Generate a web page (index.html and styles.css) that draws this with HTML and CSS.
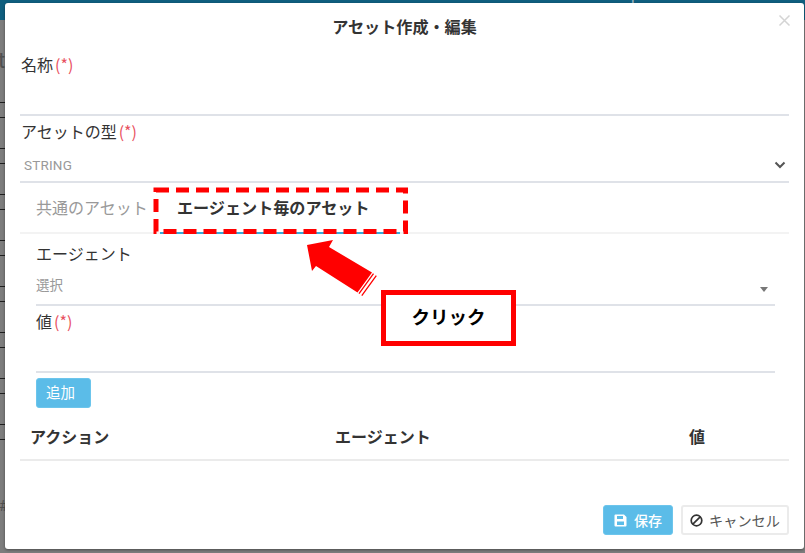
FILE: index.html
```html
<!DOCTYPE html>
<html lang="ja">
<head>
<meta charset="utf-8">
<title>アセット作成・編集</title>
<link rel="stylesheet" href="styles.css">
</head>
<body>
<div class="page-behind">
  <span class="behind-title">Robot platform labo</span>
  <span class="behind-t">t</span>
  <span class="behind-hash">#</span>
</div>
<main class="modal">
  <header class="modal-header">
    <h1 class="modal-title">アセット作成・編集</h1>
    <svg class="close" width="13" height="13" viewBox="0 0 13 13"><path d="M1.500 1.500l10 10M11.500 1.500l-10 10" stroke="#d4d4d4" stroke-width="1.500" fill="none"/></svg>
  </header>
  <section class="form">
    <label class="label">名称<span class="req">(*)</span></label>
    <div class="input name-input"></div>
    <label class="label">アセットの型<span class="req">(*)</span></label>
    <div class="select">
      <span class="select-value">STRING</span>
      <svg width="12" height="8" viewBox="0 0 12 8"><path d="M1.500 1.500L6 6l4.500-4.500" stroke="#555" stroke-width="2" fill="none"/></svg>
    </div>
    <nav class="tabs">
      <span class="tab">共通のアセット</span>
      <span class="tab tab-active">エージェント毎のアセット</span>
    </nav>
    <div class="agent-pane">
      <label class="label">エージェント</label>
      <div class="input agent-select">
        <span class="placeholder">選択</span>
        <span class="caret"></span>
      </div>
      <label class="label">値<span class="req">(*)</span></label>
      <div class="input value-input"></div>
      <button class="btn btn-primary add-btn">追加</button>
    </div>
    <div class="table-head">
      <span class="col col-action">アクション</span>
      <span class="col col-agent">エージェント</span>
      <span class="col">値</span>
    </div>
  </section>
  <footer class="modal-footer">
    <button class="btn btn-primary save-btn">
      <svg width="13" height="13" viewBox="0 0 13 13"><path fill-rule="evenodd" fill="#fff" d="M1.500 0.500h8.500l2.500 2.500v8.500a1 1 0 0 1-1 1h-10a1 1 0 0 1-1-1v-10a1 1 0 0 1 1-1zM3 2v3h6V2zM3 7.500V11h7V7.500z"/></svg>
      保存
    </button>
    <button class="btn btn-light">
      <svg width="13" height="13" viewBox="0 0 13 13"><circle cx="6.500" cy="6.500" r="5.300" stroke="#333" stroke-width="1.700" fill="none"/><path d="M2.800 10.200l7.400-7.400" stroke="#333" stroke-width="1.700"/></svg>
      キャンセル
    </button>
  </footer>
</main>
<svg class="annotation" width="805" height="553" viewBox="0 0 805 553">
  <rect x="156" y="190" width="249.500" height="41.500" fill="none" stroke="#f00" stroke-width="5" stroke-dasharray="13 7"/>
  <path fill="#f00" d="M307 245L333 240L329 247L372 272.500L357.500 292.500L316 266L312 271Z"/>
  <path d="M373.500 273.700L359 293.700M376.300 275.700L361.800 295.700" stroke="#f00" stroke-width="1.300" fill="none"/>
</svg>
<div class="callout">クリック</div>
</body>
</html>
```
FILE: styles.css
```css
* { box-sizing: border-box; }
html, body { margin: 0; height: 100%; }
body {
  width: 805px;
  height: 553px;
  overflow: hidden;
  position: relative;
  padding: 3px 1px 4px 5px;
  background:
    linear-gradient(#0f5f7f 0 20px, transparent 20px),
    linear-gradient(#7d7d7d 0 0) 0 0 / 100% 100%;
  font-family: "Noto Sans CJK JP", "Noto Sans", sans-serif;
  color: #333;
}
.page-behind {
  position: absolute;
  inset: 0;
  background: repeating-linear-gradient(
    to bottom,
    transparent 0 10px,
    #1e1e1e 10px 11px,
    transparent 11px 25px,
    #1e1e1e 25px 26px,
    transparent 26px 46px
  ) 0 92px / 5px 350px no-repeat;
}
.behind-title {
  position: absolute;
  left: 580px;
  top: -15px;
  font: 16px "Roboto", sans-serif;
  letter-spacing: .8px;
  color: #9fb4bf;
}
.behind-t { position: absolute; left: -2px; top: 48px; font: 22px "Roboto", sans-serif; color: #505050; }
.behind-hash { position: absolute; left: -1px; top: 498px; font: 14px "Roboto", sans-serif; color: #505050; }
.modal {
  position: relative;
  height: 546px;
  background: #fff;
  border-radius: 3px;
  box-shadow: 0 1px 3px rgba(0, 0, 0, .4);
  display: flex;
  flex-direction: column;
}
.modal-header {
  height: 44px;
  display: flex;
  align-items: center;
  justify-content: center;
  padding-top: 1px;
}
.modal-title { margin: 0; font-size: 16.100px; font-weight: 700; line-height: 24px; color: #333; }
.close { position: absolute; right: 13px; top: 11px; }
.form { padding: 5px 15px 0 15px; }
.label { display: block; height: 24px; padding-left: 1px; font-size: 16px; line-height: 24px; color: #333; }
.agent-pane .label { padding-left: 0; }
.req { color: #e8515f; margin-left: 2px; }
.input { border-bottom: 2px solid #dfe2e8; }
.name-input { height: 40px; margin-bottom: 3px; }
.select {
  height: 40px;
  border-bottom: 2px solid #dfe2e8;
  display: flex;
  align-items: center;
  justify-content: space-between;
  padding: 6px 3px 0 4px;
}
.select-value { font: 13.500px/16px "Roboto", sans-serif; color: #999; letter-spacing: .2px; }
.tabs {
  height: 51px;
  display: flex;
  border-bottom: 2px solid #f3f3f3;
  padding-left: 16px;
}
.tab { font-size: 16px; line-height: 48px; color: #999; width: 124px; white-space: nowrap; }
.tab-active {
  width: 240px;
  padding-left: 17px;
  font-size: 16.100px;
  font-weight: 700;
  color: #333;
  border-bottom: 2px solid #37a9d8;
  height: 51px;
}
.agent-pane { padding: 7px 14px 0 16px; }
.agent-select {
  height: 41px;
  margin-bottom: 3px;
  display: flex;
  align-items: center;
  justify-content: space-between;
  padding: 0 7px 0 0;
}
.placeholder { font-size: 13.500px; color: #999; margin-bottom: 2px; }
.caret {
  width: 0;
  height: 0;
  margin-top: 9px;
  border-left: 4px solid transparent;
  border-right: 4px solid transparent;
  border-top: 5px solid #777;
}
.value-input { height: 40px; }
.btn {
  font-family: inherit;
  border-radius: 3px;
  height: 30px;
  font-size: 14px;
  line-height: 20px;
  padding: 0;
  display: inline-flex;
  align-items: center;
  justify-content: center;
}
.btn-primary { background: #5bbce8; border: 1px solid #6cc5ec; color: #fff; }
.btn-light { background: #fff; border: 2px solid #ebebeb; color: #555; width: 108px; gap: 6px; font-size: 14.200px; }
.add-btn { width: 55px; margin-top: 5px; display: flex; justify-content: flex-start; padding: 0 0 3px 9px; font-size: 14.500px; }
.table-head {
  height: 46px;
  margin-top: 7px;
  display: flex;
  align-items: center;
  padding: 0 0 3px 10px;
  border-bottom: 2px solid #ebebeb;
  font-size: 16px;
  font-weight: 700;
  color: #333;
}
.col-action { width: 305px; }
.col-agent { width: 354px; }
.modal-footer {
  margin-top: auto;
  padding: 0 15px 14px 0;
  display: flex;
  justify-content: flex-end;
  gap: 8px;
}
.save-btn { width: 70px; gap: 7px; font-weight: 500; }
.annotation { position: absolute; left: 0; top: 0; pointer-events: none; }
.callout {
  position: absolute;
  left: 381px;
  top: 290px;
  width: 135px;
  height: 56px;
  border: 5px solid #f00;
  background: #fff;
  color: #000;
  font-size: 18.500px;
  font-weight: 700;
  line-height: 42px;
  text-align: center;
}
```
